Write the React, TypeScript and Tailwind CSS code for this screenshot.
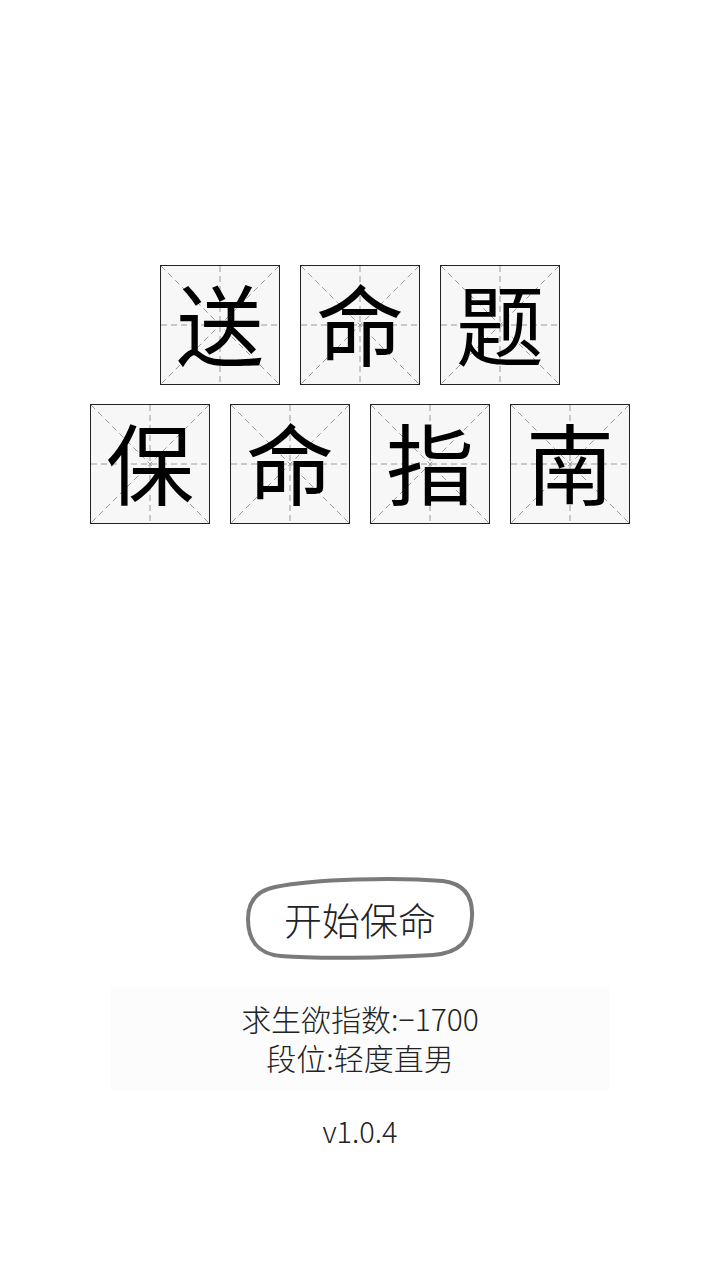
import type { ReactNode } from 'react';

const CJK = '"Noto Sans CJK SC", "Noto Sans", sans-serif';

function Tile({ children }: { children: ReactNode }) {
  return (
    <div className="relative w-[120px] h-[120px] border border-[#222] bg-[#f7f7f7] flex items-center justify-center">
      <svg className="absolute inset-0" width="118" height="118" viewBox="0 0 118 118" aria-hidden>
        <g stroke="#9a9a9a" strokeWidth="1" strokeDasharray="6 4" fill="none">
          <line x1="0" y1="59" x2="118" y2="59" />
          <line x1="59" y1="0" x2="59" y2="118" />
          <line x1="0" y1="0" x2="118" y2="118" />
          <line x1="118" y1="0" x2="0" y2="118" />
        </g>
      </svg>
      <span className="relative text-[88px] leading-none text-black pb-[8px]" style={{ fontFamily: CJK }}>
        {children}
      </span>
    </div>
  );
}

export default function App() {
  return (
    <div className="w-[720px] h-[1280px] bg-white flex flex-col items-center pt-[265px]" style={{ fontFamily: CJK }}>
      <div className="flex gap-5">
        {['送', '命', '题'].map((c) => (
          <Tile key={c}>{c}</Tile>
        ))}
      </div>
      <div className="flex gap-5 mt-[19px]">
        {['保', '命', '指', '南'].map((c, i) => (
          <Tile key={i}>{c}</Tile>
        ))}
      </div>

      <button className="relative mt-[349px] w-[230px] h-[88px] flex items-center justify-center">
        <svg className="absolute inset-0" width="230" height="88" viewBox="0 0 230 88" aria-hidden>
          <path
            d="M30 14 C 70 6, 150 4, 198 8 C 221 11, 228 26, 227 44 C 226 68, 214 80, 188 82 C 140 85, 72 86, 36 83 C 12 81, 3 66, 3 46 C 3 30, 10 18, 30 14 Z"
            fill="none"
            stroke="#7a7a7a"
            strokeWidth="4"
            strokeLinejoin="round"
          />
        </svg>
        <span className="relative text-[38px] font-extralight text-[#222] leading-none pt-1">开始保命</span>
      </button>

      <div className="mt-[25px] w-[498px] h-[104px] bg-[#fcfcfc] flex flex-col items-center justify-center text-[30px] font-extralight text-[#222] leading-[39px]">
        <div className="h-[39px]">求生欲指数:−1700</div>
        <div className="h-[39px]">段位:轻度直男</div>
      </div>

      <div className="mt-[26px] text-[29px] font-extralight text-[#222] leading-none">v1.0.4</div>
    </div>
  );
}
